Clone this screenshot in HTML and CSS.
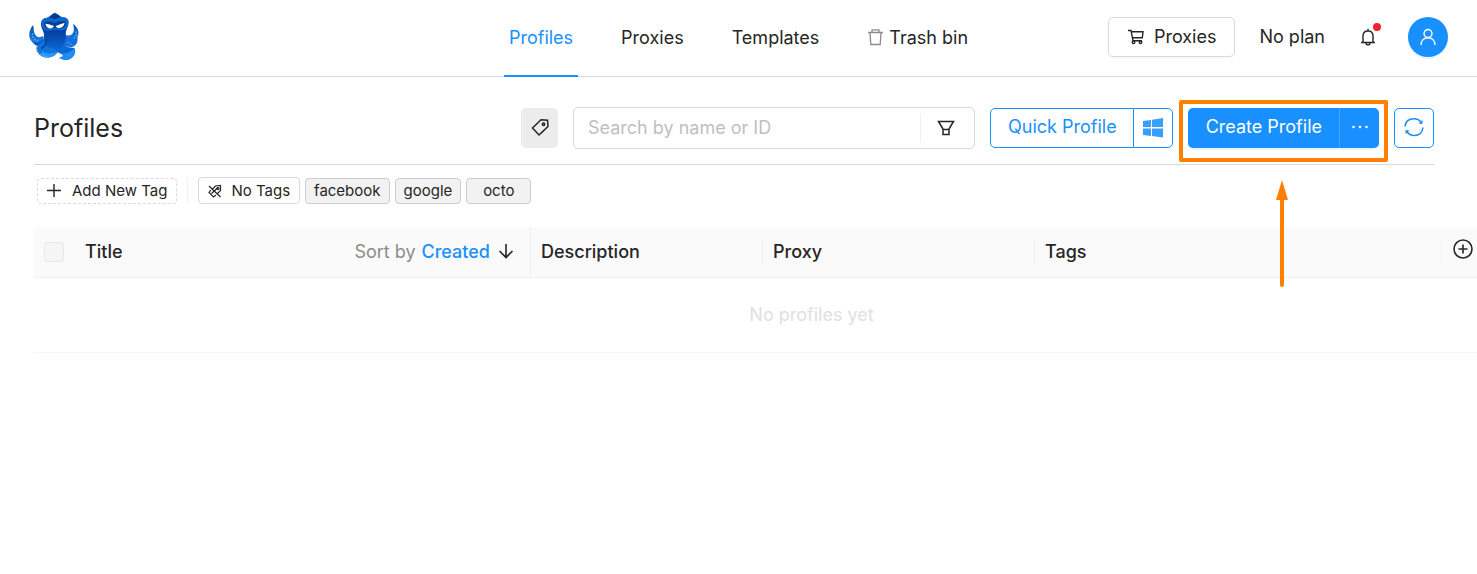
FILE: index.html
```html
<!DOCTYPE html>
<html lang="en">
<head>
<meta charset="utf-8">
<meta name="viewport" content="width=device-width, initial-scale=1">
<title>Profiles</title>
<link rel="stylesheet" href="styles.css">
</head>
<body>
<header class="header">
  <a class="logo" href="#" aria-label="Home">
    <svg width="54" height="52" viewBox="24 18 162 156" aria-hidden="true">
      <defs>
        <linearGradient id="head" x1="0" y1="0" x2="0" y2="1">
          <stop offset="0" stop-color="#0a58bf"/><stop offset=".5" stop-color="#05409c"/><stop offset="1" stop-color="#0b62cf"/>
        </linearGradient>
        <linearGradient id="arm" x1="0" y1="0" x2="0" y2="1">
          <stop offset="0" stop-color="#0a4dab"/><stop offset="1" stop-color="#1a84ee"/>
        </linearGradient>
      </defs>
      <path d="M39 64C28 76 24 96 32 108C40 121 56 120 72 112L70 96C58 102 50 100 46 92C39 82 43 74 39 64Z" fill="url(#arm)"/>
      <path d="M159 60C164 76 162 86 154 92C146 96 136 94 130 90L132 106C148 110 166 110 173 98C180 84 172 68 159 60Z" fill="url(#arm)"/>
      <path d="M32 104C38 118 52 118 72 104L84 124C60 132 40 126 32 104Z" fill="#0a5ac6"/>
      <path d="M172 98C176 118 164 130 150 130L124 122L128 96Z" fill="#1370da"/>
      <path d="M74 96C72 112 62 120 52 124C46 134 50 148 64 156C82 166 106 160 114 142L102 116Z" fill="#1273dc"/>
      <path d="M64 156C82 166 106 160 114 142C102 150 84 152 66 142Z" fill="#2c98fa"/>
      <path d="M122 106C126 122 138 132 162 132C168 144 162 158 148 166C140 170 130 168 118 162C132 158 132 152 118 148C106 142 100 128 100 112Z" fill="#0c68d6"/>
      <path d="M120 148C136 150 152 146 164 132C170 148 160 164 144 167C136 168 126 166 116 162C130 158 134 154 120 148Z" fill="#208cf5"/>
      <path d="M104 26C114 30 121 36 128 42C143 44 147 56 143 68C138 80 136 86 138 98C138 114 124 134 104 134C84 134 70 118 72 100C74 88 68 80 64 68C60 54 68 42 80 42C88 38 94 30 104 26Z" fill="url(#head)"/>
      <path d="M64 54C68 36 92 40 104 46C118 38 142 34 146 52C148 70 134 82 118 79C110 77 98 77 90 80C74 82 62 72 64 54Z" fill="#0d67d3"/>
      <path d="M72 56C82 50 94 52 104 57C116 51 128 48 138 55C140 67 130 74 118 73C108 71 100 71 90 74C78 74 70 66 72 56Z" fill="#083f91"/>
      <path d="M76 59C84 59 93 63 102 66C97 77 79 76 76 59ZM134 57C125 58 116 63 107 66C111 76 131 74 134 57Z" fill="#fff"/>
      <path d="M90 40L105 28L121 38L105 46Z" fill="#053a87"/>
      <path d="M80 102C80 118 74 128 66 132" fill="none" stroke="#0849a5" stroke-width="6" stroke-linecap="round"/>
      <g fill="none" stroke="#62b5fb" stroke-width="4" stroke-linecap="round" stroke-dasharray="1 8">
        <path d="M38 90C36 100 44 110 56 112M168 84C172 94 166 102 156 104M52 128C48 144 62 158 84 158M144 116L160 126"/>
      </g>
    </svg>
  </a>
  <nav class="nav">
    <a class="nav-link nav-link-active" href="#" aria-current="page">Profiles</a>
    <a class="nav-link" href="#">Proxies</a>
    <a class="nav-link" href="#">Templates</a>
    <a class="nav-link" href="#">
      <svg class="muted" width="17" height="18" viewBox="0 0 17 18" fill="none" stroke="currentColor" stroke-width="1.300" aria-hidden="true"><path d="M1 3.500H16M5 3.500V.800H12V3.500M3 3.500L3.800 15.500H13.200L14 3.500"/></svg>
      Trash bin</a>
  </nav>
  <div class="account">
    <button class="button button-proxies" type="button">
      <svg width="18" height="18" viewBox="0 0 18 18" fill="none" stroke="currentColor" stroke-width="1.400" aria-hidden="true"><path d="M1 2.500H4L6 12.800H15M4.500 3.800H16L15.300 9.800H5.500"/><circle cx="6.500" cy="14.300" r="1.300"/><circle cx="13.500" cy="14.300" r="1.300"/></svg>
      Proxies</button>
    <span class="plan">No plan</span>
    <button class="bell" type="button" aria-label="Notifications">
      <svg width="16" height="18" viewBox="0 0 16 18" fill="none" stroke="currentColor" stroke-width="1.400" aria-hidden="true"><path d="M1 14.500H15M3 14.500V8C3 5 5 3 8 3S13 5 13 8V14.500M8 3V.800M6 15C6 17.500 10 17.500 10 15"/></svg>
      <span class="bell-dot"></span>
    </button>
    <button class="avatar" type="button" aria-label="Account">
      <svg width="18" height="18" viewBox="0 0 18 18" fill="none" stroke="currentColor" stroke-width="1.400" aria-hidden="true"><circle cx="9" cy="5.500" r="4"/><path d="M2 17C2 12.500 5 9.700 9 9.700S16 12.500 16 17"/></svg>
    </button>
  </div>
</header>

<main class="main">
  <div class="toolbar">
    <h1 class="title">Profiles</h1>
    <button class="tag-toggle" type="button" aria-label="Toggle tags">
      <svg width="18" height="18" viewBox="0 0 18 18" fill="none" stroke="currentColor" stroke-width="1.500" aria-hidden="true"><path d="M1.500 9L10 .800L16.500 1.300L17 7.500L8 16Z"/><circle cx="12.500" cy="5.300" r="1.200"/></svg>
    </button>
    <div class="search">
      <input class="search-input" type="text" placeholder="Search by name or ID" aria-label="Search by name or ID">
      <button class="search-filter" type="button" aria-label="Filter">
        <svg width="18" height="18" viewBox="0 0 18 18" fill="none" stroke="currentColor" stroke-width="1.500" aria-hidden="true"><path d="M1.500 2.500H16.500L12 10V15.500H6V10ZM6 10.500H12"/></svg>
      </button>
    </div>
    <div class="split split-outline">
      <button class="split-main" type="button">Quick Profile</button>
      <button class="split-side" type="button" aria-label="Windows">
        <svg width="20" height="20" viewBox="0 0 20 20" fill="#399fff" aria-hidden="true"><path d="M0 3L8 2V9H0ZM9 1.800L20 0V9H9ZM0 10.500H8V18L0 17ZM9 10.500H20V19.500L9 18Z"/></svg>
      </button>
    </div>
    <div class="callout">
      <div class="split split-solid">
        <button class="split-main" type="button">Create Profile</button>
        <button class="split-side" type="button" aria-label="More options">
          <svg width="18" height="18" viewBox="0 0 18 18" fill="currentColor" aria-hidden="true"><circle cx="2.500" cy="8" r="1.300"/><circle cx="9" cy="8" r="1.300"/><circle cx="15.500" cy="8" r="1.300"/></svg>
        </button>
      </div>
      <span class="callout-frame"></span>
      <svg class="callout-arrow" width="12" height="108" viewBox="0 0 12 108" aria-hidden="true"><path d="M6 0L12 20H0Z" fill="#ff8000"/><path d="M6 18V105" stroke="#ff8000" stroke-width="4" stroke-linecap="round"/></svg>
    </div>
    <button class="refresh" type="button" aria-label="Refresh">
      <svg width="20" height="20" viewBox="0 0 20 20" fill="none" stroke="currentColor" stroke-width="1.500" aria-hidden="true"><path d="M1 8.500C1.500 3.500 5 .800 10 .800C13 .800 15.500 2 17.300 4.500M19 9.500C18.500 14.500 15 17.500 10 17.500C7 17.500 4.500 16 2.700 13.500"/><path d="M18.500 2V6L14.500 5.500ZM1.500 16V12L5.500 12.500Z" fill="currentColor" stroke="none"/></svg>
    </button>
  </div>

  <div class="tags">
    <button class="tag tag-add" type="button">
      <svg width="14" height="14" viewBox="0 0 14 14" stroke="currentColor" stroke-width="1.400" aria-hidden="true"><path d="M7 0V13M0 6.500H14"/></svg>
      Add New Tag</button>
    <span class="tags-divider"></span>
    <div class="tag-list">
      <button class="tag tag-none" type="button">
        <svg width="14" height="14" viewBox="0 0 14 14" fill="none" stroke="currentColor" stroke-width="1.200" aria-hidden="true"><path d="M4.500 5L7.500 2L12.500 1.500L12.500 6.500L9.500 9.500M3 6L1 8.500L5.500 13L8 11M1 2L12.500 13M3.500 9.500L10 3.500"/><circle cx="10" cy="4.500" r="1"/></svg>
        No Tags</button>
      <button class="tag" type="button">facebook</button>
      <button class="tag" type="button">google</button>
      <button class="tag tag-short" type="button">octo</button>
    </div>
  </div>

  <div class="table-scroll">
    <table class="table">
      <colgroup><col class="col-check"><col class="col-title"><col class="col-description"><col class="col-proxy"><col class="col-tags"><col class="col-add"><col></colgroup>
      <thead>
        <tr>
          <th class="cell-check"><input class="checkbox" type="checkbox" disabled aria-label="Select all"></th>
          <th class="cell-title">
            <div class="title-head"><span>Title</span>
              <button class="sort" type="button">Sort by <span class="sort-field">Created</span>
                <svg width="16" height="16" viewBox="0 0 16 16" fill="none" stroke="currentColor" stroke-width="1.600" aria-hidden="true"><path d="M8 0V13.500M1.500 7L8 13.500L14.500 7"/></svg>
              </button></div>
          </th>
          <th>Description</th>
          <th>Proxy</th>
          <th class="cell-tags">Tags</th>
          <th class="cell-add">
            <button class="add-column" type="button" aria-label="Add column"><svg width="20" height="20" viewBox="0 0 20 20" fill="none" stroke="currentColor" stroke-width="1.600" aria-hidden="true"><circle cx="10" cy="10" r="9"/><path d="M10 5.500V14.500M5.500 10H14.500"/></svg></button>
          </th>
          <th></th>
        </tr>
      </thead>
      <tbody>
        <tr><td class="empty" colspan="7">No profiles yet</td></tr>
      </tbody>
    </table>
  </div>
</main>
</body>
</html>
```

FILE: styles.css
```css
* { box-sizing: border-box; }

body {
  margin: 0;
  background: #fff;
  color: #262626;
  font: 18px/28px Inter, "Liberation Sans", sans-serif;
}

button, input { font: inherit; color: inherit; }

button {
  display: inline-flex;
  align-items: center;
  justify-content: center;
  padding: 0;
  border: 0;
  background: none;
  white-space: nowrap;
  cursor: pointer;
}

svg { display: block; flex: none; }

.header {
  display: grid;
  grid-template-columns: 1fr auto 1fr;
  border-bottom: 1px solid #d9d9d9;
  padding: 0 28px;
}

.logo { justify-self: start; padding: 10px 0; }

.nav { display: flex; gap: 38px; margin-bottom: -1px; }

.nav-link {
  display: flex;
  align-items: center;
  gap: 5px;
  height: 77px;
  padding: 0 5px;
  border-bottom: 2px solid transparent;
  color: inherit;
  text-decoration: none;
}

.nav-link-active { color: #1890ff; border-color: #1890ff; }

.muted { color: #8c8c8c; }

.account { display: flex; align-items: center; justify-content: flex-end; height: 74px; margin-right: 1px; }

.button-proxies {
  gap: 9px;
  height: 40px;
  padding: 0 18px;
  border: 1px solid #d9d9d9;
  border-radius: 5px;
  box-shadow: 0 2px 0 #00000005;
}

.plan { margin-left: 24px; }

.bell { position: relative; margin-left: 35px; }

.bell-dot {
  position: absolute;
  top: -5px;
  right: -5px;
  width: 8px;
  height: 8px;
  border-radius: 50%;
  background: #f5222d;
}

.avatar {
  width: 40px;
  height: 40px;
  margin-left: 32px;
  border-radius: 50%;
  background: #1890ff;
  color: #fff;
  box-shadow: 0 2px 0 #1890ff1a;
}

.main { padding: 30px 0 0 34px; }

.toolbar {
  display: flex;
  align-items: center;
  gap: 15px;
  margin-right: 43px;
  padding-bottom: 15px;
  border-bottom: 1px solid #d9d9d9;
}

.title { flex: 1; margin: 0; font-size: 25px; line-height: 40px; font-weight: 400; }

.tag-toggle { width: 37px; height: 40px; border-radius: 5px; background: #ececec; }

.search {
  display: flex;
  align-items: center;
  width: 402px;
  height: 42px;
  border: 1px solid #d9d9d9;
  border-radius: 5px;
}

.search-input {
  flex: 1;
  min-width: 0;
  padding: 0 14px;
  border: 0;
  outline: 0;
  background: none;
}

.search-input::placeholder { color: #bfbfbf; opacity: 1; }

.search-filter { width: 54px; height: 30px; padding-right: 4px; border-left: 1px solid #f0f0f0; }

.split { display: flex; height: 40px; border-radius: 5px; }
.split-main { padding: 0 16px 2px 17px; }
.split-side { width: 39px; border-left: 1px solid; }
.split-outline { border: 1px solid #1890ff; color: #1890ff; }
.split-outline .split-side { border-color: #1890ff; }
.split-solid { background: #1890ff; color: #fff; box-shadow: 0 2px 0 #1890ff1a; }
.split-solid .split-main { padding: 0 17px 2px 18px; }
.split-solid .split-side { width: 40px; border-color: #40a9ff; }

.callout { position: relative; }

.callout-frame {
  position: absolute;
  inset: -8px -9px -14px;
  border: 4px solid #ff8000;
  border-radius: 2px;
  pointer-events: none;
}

.callout-arrow { position: absolute; top: 72px; left: 88px; pointer-events: none; }

.refresh { width: 40px; height: 40px; border: 1px solid #1890ff; border-radius: 5px; color: #1890ff; }

.tags { display: flex; align-items: center; gap: 10px; padding: 12px 3px 0; }

.tags-divider { width: 1px; height: 26px; background: #f0f0f0; }

.tag-list { display: flex; align-items: center; gap: 5px; }

.tag {
  height: 26px;
  padding: 0 8px;
  border: 1px solid #ccc;
  border-radius: 4px;
  background: #f2f2f2;
  font-size: 15px;
  line-height: 24px;
}

.tag-add { gap: 11px; padding: 0 9px; border-color: #d9d9d9; border-style: dashed; background: #fff; }
.tag-none { gap: 9px; height: 27px; padding: 0 9px; border-color: #d9d9d9; background: #fff; }
.tag-short { min-width: 65px; }

.table-scroll { margin-top: 23px; overflow: hidden; }

.table { width: 100%; min-width: 1555px; table-layout: fixed; border-collapse: separate; border-spacing: 0; }

.col-check { width: 41px; }
.col-title { width: 456px; }
.col-description { width: 232px; }
.col-proxy { width: 272px; }
.col-tags { width: 406px; }
.col-add { width: 44px; }

.table th {
  height: 51px;
  padding: 0 10px;
  border-bottom: 1px solid #f0f0f0;
  background: linear-gradient(#f0f0f0, #f0f0f0) right center / 1px 28px no-repeat #fafafa;
  font-weight: 500;
  text-align: left;
}

.table th:first-child { border-top-left-radius: 5px; }
.table .cell-check, .table .cell-add, .table th:last-child { padding: 0; background: #fafafa; }
.table .cell-title { padding: 0 16px 0 10px; border-right: 1px solid #f0f0f0; background: #fafafa; }
.table .cell-tags { background-image: linear-gradient(#f6f6f6, #f6f6f6); }

.checkbox {
  display: block;
  appearance: none;
  width: 20px;
  height: 20px;
  margin: 0 0 0 10px;
  border: 1px solid #e8e8e8;
  border-radius: 4px;
  background: #f5f5f5;
}

.title-head { display: flex; align-items: center; justify-content: space-between; }

.sort { gap: 6px; color: #8c8c8c; font-weight: 400; }
.sort svg { margin-left: 2px; color: #262626; }
.sort-field { color: #1890ff; font-weight: 500; }

.add-column { display: flex; margin: 0 auto; padding-bottom: 6px; }

.empty {
  height: 75px;
  padding: 0;
  border-bottom: 1px solid #f5f5f5;
  color: #e0e0e0;
  text-align: center;
}
```
